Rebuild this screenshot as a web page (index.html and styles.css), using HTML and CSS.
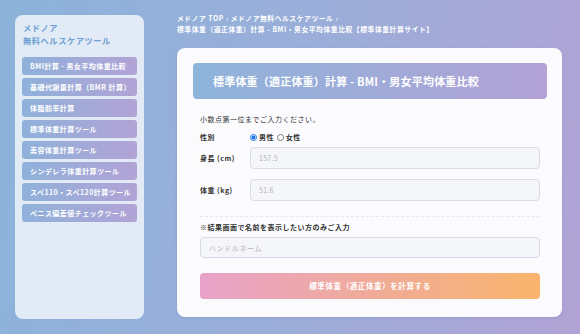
FILE: index.html
```html
<!DOCTYPE html>
<html lang="ja">
<head>
<meta charset="utf-8">
<link rel="stylesheet" href="styles.css">
</head>
<body>
<div class="page">
  <aside class="sidebar">
    <div class="side-title">メドノア<br>無料ヘルスケアツール</div>
    <nav class="menu">
      <a class="menu-item">BMI計算 - 男女平均体重比較</a>
      <a class="menu-item">基礎代謝量計算（BMR 計算）</a>
      <a class="menu-item">体脂肪率計算</a>
      <a class="menu-item">標準体重計算ツール</a>
      <a class="menu-item">美容体重計算ツール</a>
      <a class="menu-item">シンデレラ体重計算ツール</a>
      <a class="menu-item">スペ110・スペ120計算ツール</a>
      <a class="menu-item">ペニス偏差値チェックツール</a>
    </nav>
  </aside>
  <main class="main">
    <div class="crumbs">メドノア TOP › メドノア無料ヘルスケアツール ›<br>標準体重（適正体重）計算 - BMI・男女平均体重比較【標準体重計算サイト】</div>
    <section class="card">
      <h1 class="card-head">標準体重（適正体重）計算 - BMI・男女平均体重比較</h1>
      <div class="form">
        <p class="lead">小数点第一位までご入力ください。</p>
        <div class="row row-sex">
          <span class="label">性別</span>
          <span class="radios">
            <span class="radio on"></span><span class="rtext">男性</span>
            <span class="radio"></span><span class="rtext">女性</span>
          </span>
        </div>
        <div class="row row-h">
          <span class="label">身長 (cm)</span>
          <div class="input">157.5</div>
        </div>
        <div class="row row-w">
          <span class="label">体重 (kg)</span>
          <div class="input">51.6</div>
        </div>
        <div class="dash"></div>
        <p class="note">※結果画面で名前を表示したい方のみご入力</p>
        <div class="input input-name">ハンドルネーム</div>
        <div class="btn">標準体重（適正体重）を計算する</div>
      </div>
    </section>
  </main>
</div>
</body>
</html>
```
FILE: styles.css
```css
* { box-sizing: border-box; }
html, body { margin: 0; padding: 0; }
body {
  width: 580px;
  height: 334px;
  overflow: hidden;
  font-family: "Noto Sans CJK JP", "Noto Sans", sans-serif;
  background: linear-gradient(100deg, #8cb3da 0%, #9aaed9 50%, #b1a3d5 100%);
}
.page {
  display: flex;
  align-items: flex-start;
  padding: 15px 18px 0 15px;
  gap: 33px;
}
.sidebar {
  width: 129px;
  height: 304px;
  flex: none;
  background: rgba(240, 244, 250, 0.85);
  border-radius: 8px;
  padding: 6px 7px 0 7px;
}
.side-title {
  color: #6f9fd3;
  font-weight: 700;
  font-size: 8.2px;
  line-height: 13px;
  letter-spacing: 0.6px;
  padding-left: 1px;
}
.menu {
  display: flex;
  flex-direction: column;
  gap: 3px;
  margin-top: 10px;
}
.menu-item {
  display: block;
  height: 18px;
  line-height: 18px;
  padding-left: 8px;
  border-radius: 3px;
  background: linear-gradient(90deg, #8fb1da, #b2a3d6);
  color: #fff;
  font-weight: 700;
  font-size: 7px;
  letter-spacing: 0.45px;
  white-space: nowrap;
}
.main {
  flex: 1;
  display: flex;
  flex-direction: column;
}
.crumbs {
  color: #fff;
  font-weight: 700;
  font-size: 6.8px;
  line-height: 10.5px;
  letter-spacing: 0.55px;
  margin-top: -2px;
  white-space: nowrap;
}
.card {
  margin-top: 14px;
  background: #fbfbfe;
  border-radius: 8px;
  padding: 15px 15px 18px 16px;
  box-shadow: 0 1px 3px rgba(80, 80, 140, 0.15);
}
.card-head {
  margin: 0;
  height: 36px;
  line-height: 36px;
  border-radius: 4px;
  background: linear-gradient(90deg, #8db4da, #b2a2d6);
  color: #fff;
  font-weight: 700;
  font-size: 11px;
  letter-spacing: 0.2px;
  padding-left: 20px;
  white-space: nowrap;
}
.form {
  padding: 0 7px;
  display: flex;
  flex-direction: column;
  color: #333;
}
.lead, .note {
  margin: 14px 0 0;
  font-size: 7px;
  line-height: 12px;
  letter-spacing: 0.5px;
}
.note { margin-top: 4px; font-weight: 700; }
.row {
  display: flex;
  align-items: center;
}
.label {
  width: 50px;
  flex: none;
  font-size: 7px;
  font-weight: 700;
  letter-spacing: 0.5px;
}
.row-sex { margin-top: 6px; height: 12px; }
.radios {
  display: flex;
  align-items: center;
  font-size: 7px;
  font-weight: 700;
  letter-spacing: 0.4px;
}
.radio {
  width: 7px;
  height: 7px;
  border-radius: 50%;
  border: 1px solid #777;
  background: #fff;
  margin-right: 2px;
}
.radio.on {
  border-color: #1a73e8;
  background: radial-gradient(circle, #1a73e8 0 1.8px, #fff 2.2px);
}
.rtext { margin-right: 3px; }
.row-h { margin-top: 4px; }
.row-w { margin-top: 10px; }
.input {
  flex: 1;
  height: 22px;
  line-height: 20px;
  background: #f5f6f9;
  border: 1px solid #d8dbe8;
  border-radius: 4px;
  padding-left: 8px;
  color: #b3b3b3;
  font-size: 7px;
  letter-spacing: 0.3px;
}
.dash {
  margin-top: 15px;
  border-top: 1px dashed #e6e6ee;
}
.input-name {
  flex: none;
  height: 21px;
  margin-top: 4px;
  letter-spacing: 0.6px;
}
.btn {
  margin-top: 15px;
  height: 26px;
  line-height: 26px;
  border-radius: 4px;
  background: linear-gradient(90deg, #e8a2c9, #f8b46b);
  color: #fff;
  text-align: center;
  font-weight: 700;
  font-size: 7.5px;
  letter-spacing: 0.6px;
}
```
